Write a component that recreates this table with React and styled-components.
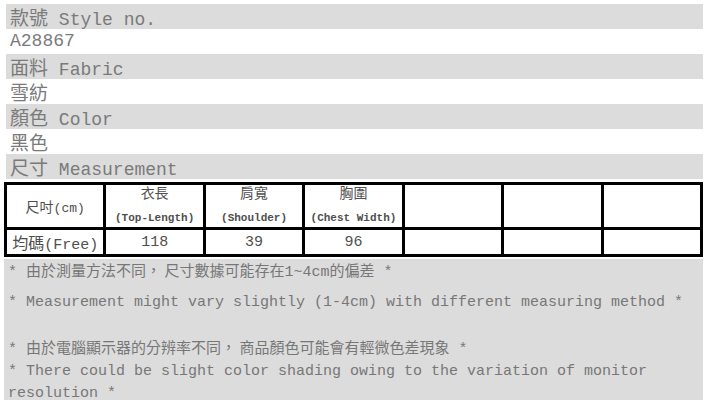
import React from "react";
import styled, { createGlobalStyle } from "styled-components";

const GlobalStyle = createGlobalStyle`
  html, body {
    margin: 0;
    padding: 0;
    background: #ffffff;
  }
`;

const Page = styled.div`
  width: 707px;
  padding: 4px 4px 0 4px;
  box-sizing: border-box;
  font-family: "Liberation Mono", "Noto Sans CJK TC", monospace;
`;

const InfoRow = styled.div`
  height: 25px;
  line-height: 25px;
  padding-left: 4px;
  margin-left: 2px;
  background: ${(p) => (p.$shaded ? "#dcdcdc" : "#ffffff")};
  color: #7a7a7a;
  font-size: 18px;
  white-space: nowrap;
`;

const Han = styled.span`
  font-family: "Noto Sans CJK TC", sans-serif;
  font-size: ${(p) => p.$size || 19}px;
  font-weight: 400;
`;

const SizeTable = styled.table`
  width: 699px;
  margin-top: 3px;
  border-collapse: collapse;
  border: 3px solid #000;
  table-layout: fixed;
  color: #4f4f4f;
`;

const Cell = styled.td`
  border: 3px solid #000;
  padding: 0;
  text-align: center;
  vertical-align: ${(p) => (p.$top ? "top" : "middle")};
  height: ${(p) => p.$h}px;
  font-size: ${(p) => p.$fs || 15}px;
  white-space: nowrap;
  overflow: hidden;
`;

const HeadTitle = styled.div`
  font-family: "Noto Sans CJK TC", sans-serif;
  font-size: 14px;
  line-height: 14px;
`;

const HeadSub = styled.div`
  font-size: 11px;
  font-weight: bold;
  line-height: 14px;
  margin-top: 12px;
`;

const Notes = styled.div`
  margin-top: 2px;
  padding: 0 4px;
  height: 141px;
  box-sizing: border-box;
  background: #dcdcdc;
  color: #777;
  font-size: 15px;
  line-height: 22px;
`;

const NoteLine = styled.div`
  margin-bottom: ${(p) => p.$gap || 0}px;
  min-height: 22px;
`;

const info = [
  { han: "款號", en: "Style no.", shaded: true },
  { en: "A28867" },
  { han: "面料", en: "Fabric", shaded: true },
  { han: "雪紡" },
  { han: "顏色", en: "Color", shaded: true },
  { han: "黑色" },
  { han: "尺寸", en: "Measurement", shaded: true },
];

const heads = [
  { han: "衣長", en: "(Top-Length)" },
  { han: "肩寬", en: "(Shoulder)" },
  { han: "胸圍", en: "(Chest Width)" },
];

const values = ["118", "39", "96"];

export default function App() {
  return (
    <>
      <GlobalStyle />
      <Page>
        {info.map((r, i) => (
          <InfoRow key={i} $shaded={r.shaded}>
            {r.han && <Han>{r.han}</Han>}
            {r.han && r.en && " "}
            {r.en}
          </InfoRow>
        ))}

        <SizeTable>
          <tbody>
            <tr>
              <Cell $h={42} $fs={13}>
                <Han $size={14}>尺吋</Han>(cm)
              </Cell>
              {heads.map((h) => (
                <Cell key={h.han} $h={42} $top>
                  <HeadTitle>{h.han}</HeadTitle>
                  <HeadSub>{h.en}</HeadSub>
                </Cell>
              ))}
              <Cell $h={42} />
              <Cell $h={42} />
              <Cell $h={42} />
            </tr>
            <tr>
              <Cell $h={14} $fs={15}>
                <Han $size={16}>均碼</Han>(Free)
              </Cell>
              {values.map((v) => (
                <Cell key={v} $h={14} $fs={15}>
                  {v}
                </Cell>
              ))}
              <Cell $h={14} />
              <Cell $h={14} />
              <Cell $h={14} />
            </tr>
          </tbody>
        </SizeTable>

        <Notes>
          <NoteLine $gap={8}>
            * <Han $size={15}>由於測量方法不同， 尺寸數據可能存在</Han>1~4cm<Han $size={15}>的偏差</Han> *
          </NoteLine>
          <NoteLine>
            * Measurement might vary slightly (1-4cm) with different measuring method *
          </NoteLine>
          <NoteLine />
          <NoteLine>
            * <Han $size={15}>由於電腦顯示器的分辨率不同， 商品顏色可能會有輕微色差現象</Han> *
          </NoteLine>
          <NoteLine>
            * There could be slight color shading owing to the variation of monitor resolution *
          </NoteLine>
        </Notes>
      </Page>
    </>
  );
}
